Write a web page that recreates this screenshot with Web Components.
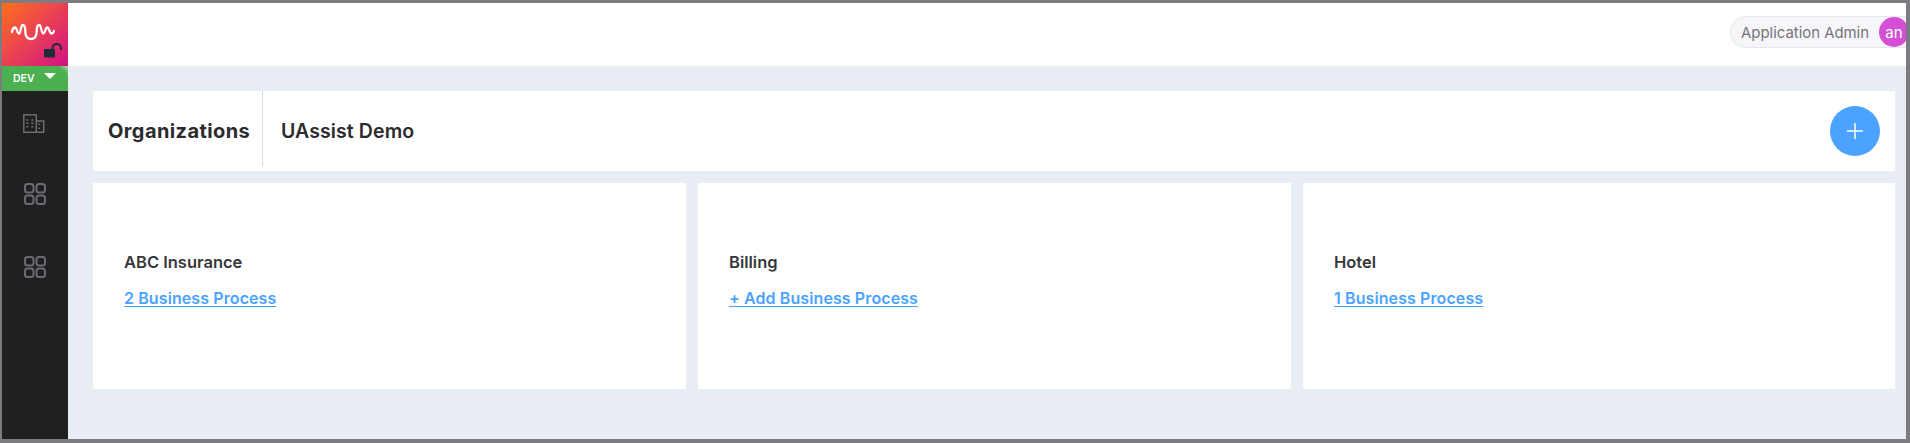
<!DOCTYPE html>
<html>
<head>
<meta charset="utf-8">
<title>Organizations</title>
<style>
html, body { margin: 0; height: 100%; }
body { font-family: "Inter", "Liberation Sans", sans-serif; overflow: hidden; }
</style>
</head>
<body>
<app-shell>
	<side-nav slot="nav"></side-nav>
	<top-bar slot="top" role-name="Application Admin" initials="an"></top-bar>
	<org-header title-text="Organizations" org="UAssist Demo"></org-header>
	<org-grid>
		<org-card name="ABC Insurance" link="2 Business Process"></org-card>
		<org-card name="Billing" link="+ Add Business Process"></org-card>
		<org-card name="Hotel" link="1 Business Process"></org-card>
	</org-grid>
</app-shell>

<script>
// Outer frame: grey window edge, nav column on the left, top bar and content on the right
class AppShell extends HTMLElement {
	constructor() {
		super();
		const shadowRoot = this.attachShadow({ mode: 'open' });
		shadowRoot.innerHTML = `
			<style>
			:host {
				display: flex;
				box-sizing: border-box;
				height: 443px;
				border: solid #7c7c80;
				border-width: 3px 4px 4px 2px;
				background: #e9eef5;
			}
			.right { flex: 1; display: flex; flex-direction: column; min-width: 0; }
			main {
				flex: 1;
				display: flex;
				flex-direction: column;
				gap: 12px;
				padding: 25px 11px 0 25px;
			}
			</style>
			<slot name="nav"></slot>
			<div class="right">
				<slot name="top"></slot>
				<main><slot></slot></main>
			</div>
		`;
	}
}

class SideNav extends HTMLElement {
	constructor() {
		super();
		const shadowRoot = this.attachShadow({ mode: 'open' });
		const grid = `
			<svg width="22" height="22" viewBox="0 0 22 22" fill="none" stroke="#696a73" stroke-width="2">
				<rect x="1" y="1" width="8.5" height="8.5" rx="2.5"/>
				<rect x="12.5" y="1" width="8.5" height="8.5" rx="2.5"/>
				<rect x="1" y="12.5" width="8.5" height="8.5" rx="2.5"/>
				<rect x="12.5" y="12.5" width="8.5" height="8.5" rx="2.5"/>
			</svg>`;
		shadowRoot.innerHTML = `
			<style>
			:host {
				display: flex;
				flex-direction: column;
				width: 66px;
				flex: none;
				background: #202020;
			}
			.logo {
				height: 63px;
				position: relative;
				background: linear-gradient(135deg, #ff6f1a 0%, #ef4a4a 40%, #d01183 100%);
			}
			.logo svg { display: block; }
			.lock { position: absolute; left: 42px; top: 40px; }
			.env {
				height: 25px;
				background: linear-gradient(225deg, #b5d8b6 0, #4caf50 7px);
				display: flex;
				align-items: center;
				color: #fff;
				font: 600 10.5px "Inter", "Liberation Sans", sans-serif;
				padding-left: 11px;
				gap: 9px;
			}
			.caret {
				width: 0;
				height: 0;
				border: 6px solid transparent;
				border-top: 6px solid #fff;
				border-bottom: 0;
				margin-top: -5px;
			}
			nav {
				display: flex;
				flex-direction: column;
				align-items: center;
				padding: 23px 0 0 0;
			}
			.item { height: 73px; display: flex; justify-content: center; }
			.item:first-child { height: 69px; }
			</style>
			<div class="logo">
				<svg width="66" height="63" viewBox="0 0 66 63" fill="none" stroke="#fff" stroke-width="2.3" stroke-linecap="round" stroke-linejoin="round">
					<path d="M10 29C10.500 26 11.500 24.500 13 24.500C15.200 24.500 14.800 30.500 17 30.500C18.700 30.500 18.800 22 20.700 22C22.500 22 23.300 24 23.300 28C23.300 33 25.500 36 29 36C32.500 36 34.700 33 34.700 28C34.700 24 35.500 22 37.300 22C39.300 22 39.300 30.500 41.300 30.500C43.300 30.500 43.300 24.500 45.300 24.500C47.300 24.500 47.300 30.500 49.500 30.500C51 30.500 51.500 29.500 52 28"/>
				</svg>
				<svg class="lock" width="20" height="20" viewBox="0 0 20 20">
					<rect x="0" y="6" width="11" height="8.500" rx="1" fill="#1f2a3c"/>
					<path d="M8.500 7V5.200a4.250 4.250 0 0 1 8.500 0V7" fill="none" stroke="#1f2a3c" stroke-width="2"/>
				</svg>
			</div>
			<div class="env"><span>DEV</span><span class="caret"></span></div>
			<nav>
				<div class="item">
					<svg width="24" height="20" viewBox="0 0 24 20" fill="none" stroke="#6f7076" stroke-width="1.400">
						<rect x="0.800" y="0.800" width="12.500" height="17.500"/>
						<path d="M13.300 7H20.700V18.300H13.300"/>
						<path d="M3.300 6h2M8.300 6h2M3.300 9.300h2M8.300 9.300h2M3.300 12.700h2M8.300 12.700h2M15.500 10.300h1.600M15.500 14.300h1.600"/>
					</svg>
				</div>
				<div class="item">${grid}</div>
				<div class="item">${grid}</div>
			</nav>
		`;
	}
}

class TopBar extends HTMLElement {
	constructor() {
		super();
		const shadowRoot = this.attachShadow({ mode: 'open' });
		shadowRoot.innerHTML = `
			<style>
			:host {
				display: flex;
				justify-content: flex-end;
				align-items: flex-start;
				height: 63px;
				background: #fff;
				overflow: hidden;
			}
			.pill {
				box-sizing: border-box;
				display: flex;
				align-items: center;
				height: 32px;
				margin-top: 13px;
				margin-right: -3px;
				padding-left: 10px;
				gap: 10px;
				border: 1px solid #e6e6ec;
				border-right: 0;
				border-radius: 16px 0 0 16px;
				background: #f6f6f9;
				color: #74747c;
				font-size: 14.9px;
			}
			.role { padding-top: 1px; }
			.avatar {
				width: 30px;
				height: 30px;
				border-radius: 50%;
				background: #d44fd6;
				color: #fff;
				display: flex;
				align-items: center;
				justify-content: center;
				font-size: 15px;
			}
			</style>
			<div class="pill">
				<span class="role">${this.getAttribute('role-name')}</span>
				<span class="avatar">${this.getAttribute('initials')}</span>
			</div>
		`;
	}
}

class OrgHeader extends HTMLElement {
	constructor() {
		super();
		const shadowRoot = this.attachShadow({ mode: 'open' });
		shadowRoot.innerHTML = `
			<style>
			:host {
				display: flex;
				align-items: flex-start;
				height: 80px;
				background: #fff;
				color: #2b2b2e;
			}
			.title {
				box-sizing: border-box;
				height: 75px;
				width: 170px;
				display: flex;
				align-items: center;
				padding: 5px 0 0 15px;
				border-right: 1px solid #d8dae2;
				font-size: 20px;
				letter-spacing: .4px;
				font-weight: 700;
			}
			.org {
				height: 80px;
				display: flex;
				align-items: center;
				padding-left: 18px;
				font-size: 19.5px;
				letter-spacing: .1px;
				font-weight: 600;
				flex: 1;
			}
			button {
				width: 50px;
				height: 50px;
				margin: 15px 15px 0 0;
				padding: 0;
				border: 0;
				border-radius: 50%;
				background: #4ba3ff;
				display: flex;
				align-items: center;
				justify-content: center;
			}
			</style>
			<div class="title">${this.getAttribute('title-text')}</div>
			<div class="org">${this.getAttribute('org')}</div>
			<button aria-label="Add">
				<svg width="18" height="18" viewBox="0 0 18 18" stroke="#fff" stroke-width="1.500"><path d="M9 1v16M1 9h16"/></svg>
			</button>
		`;
	}
}

class OrgGrid extends HTMLElement {
	constructor() {
		super();
		const shadowRoot = this.attachShadow({ mode: 'open' });
		shadowRoot.innerHTML = `
			<style>
			:host { display: grid; grid-template-columns: 593fr 593fr 592fr; gap: 12px; }
			</style>
			<slot></slot>
		`;
	}
}

class OrgCard extends HTMLElement {
	constructor() {
		super();
		const shadowRoot = this.attachShadow({ mode: 'open' });
		shadowRoot.innerHTML = `
			<style>
			:host {
				display: block;
				box-sizing: border-box;
				height: 206px;
				padding: 68px 31px 0;
				background: #fff;
			}
			.name { font-size: 16.5px; font-weight: 600; color: #37373b; line-height: 22px; }
			a {
				display: inline-block;
				margin-top: 14px;
				font-size: 16px;
				letter-spacing: .1px;
				font-weight: 600;
				line-height: 22px;
				color: #4ba3ff;
				text-decoration: underline;
				text-underline-offset: 2px;
			}
			</style>
			<div class="name">${this.getAttribute('name')}</div>
			<a href="#">${this.getAttribute('link')}</a>
		`;
	}
}

customElements.define('app-shell', AppShell);
customElements.define('side-nav', SideNav);
customElements.define('top-bar', TopBar);
customElements.define('org-header', OrgHeader);
customElements.define('org-grid', OrgGrid);
customElements.define('org-card', OrgCard);
</script>
</body>
</html>
